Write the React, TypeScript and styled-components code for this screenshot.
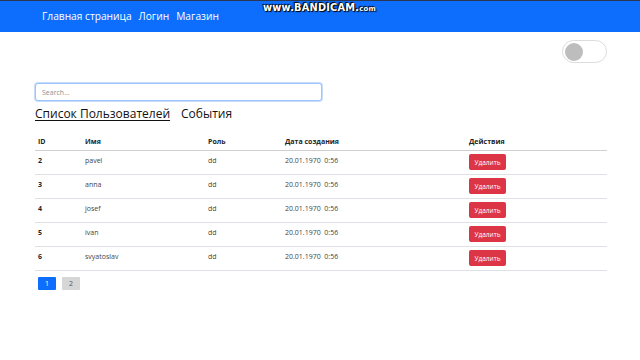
import React, { useState } from "react";
import styled, { createGlobalStyle } from "styled-components";

const users = [
  { id: 2, name: "pavel", role: "dd", created: "20.01.1970  0:56" },
  { id: 3, name: "anna", role: "dd", created: "20.01.1970  0:56" },
  { id: 4, name: "josef", role: "dd", created: "20.01.1970  0:56" },
  { id: 5, name: "ivan", role: "dd", created: "20.01.1970  0:56" },
  { id: 6, name: "svyatoslav", role: "dd", created: "20.01.1970  0:56" },
];

const GlobalStyle = createGlobalStyle`
  * { box-sizing: border-box; }
  body {
    margin: 0;
    background: #fff;
    font-family: "Open Sans", "Noto Sans", sans-serif;
    color: #212529;
  }
`;

const Page = styled.div`
  position: relative;
  width: 640px;
  height: 360px;
  overflow: hidden;
`;

const Navbar = styled.nav`
  height: 32px;
  background: #0d6efd;
  border-top: 1px solid #2a3550;
  display: flex;
  align-items: center;
  gap: 7px;
  padding: 0 0 1px 42px;
`;

const NavLink = styled.a`
  color: #fff;
  font-size: 10.2px;
  text-decoration: none;
  cursor: pointer;
`;

const Watermark = styled.div`
  position: absolute;
  top: 2px;
  left: 263px;
  font-family: "DejaVu Sans", sans-serif;
  font-weight: bold;
  font-size: 9.8px;
  color: #fff;
  letter-spacing: 0.2px;
  text-shadow: 0 0 1px #000, 1px 1px 1px #000, -1px -1px 1px #000;
  span { font-size: 7px; }
`;

const Content = styled.main`
  padding: 8px 33px 0 35px;
`;

const ToggleRow = styled.div`
  display: flex;
  justify-content: flex-end;
  height: 23px;
`;

const Switch = styled.button<{ $on: boolean }>`
  width: 45px;
  height: 23px;
  border-radius: 12px;
  border: 1px solid #dcdcdc;
  background: ${(p) => (p.$on ? "#0d6efd" : "#fff")};
  padding: 0 2px;
  display: flex;
  align-items: center;
  justify-content: ${(p) => (p.$on ? "flex-end" : "flex-start")};
  cursor: pointer;
  &::before {
    content: "";
    width: 18px;
    height: 18px;
    border-radius: 50%;
    background: ${(p) => (p.$on ? "#fff" : "#bdbdbd")};
  }
`;

const SearchInput = styled.input`
  display: block;
  margin-top: 20px;
  width: 287px;
  height: 18px;
  border: 1px solid #9ec5fe;
  border-radius: 3px;
  box-shadow: 0 0 0 1px #c7dcfb;
  padding: 0 6px;
  font-family: inherit;
  font-size: 7px;
  outline: none;
  &::placeholder { color: #8a8f95; }
`;

const Tabs = styled.div`
  display: flex;
  gap: 11px;
  margin-top: 4px;
`;

const Tab = styled.button<{ $active: boolean }>`
  background: none;
  border: none;
  padding: 0;
  font-family: inherit;
  font-size: 12px;
  color: #111;
  text-decoration: ${(p) => (p.$active ? "underline" : "none")};
  text-underline-offset: 2px;
  cursor: pointer;
`;

const Table = styled.table`
  width: 572px;
  margin-top: 12px;
  border-collapse: collapse;
  font-size: 7px;
`;

const Th = styled.th<{ $w: number }>`
  width: ${(p) => p.$w}px;
  text-align: left;
  font-weight: 700;
  padding: 3px 3px 4px;
  border-bottom: 1px solid #cfcfcf;
`;

const Td = styled.td<{ $bold?: boolean }>`
  padding: 5px 3px 0;
  height: 24px;
  vertical-align: top;
  font-weight: ${(p) => (p.$bold ? 700 : 400)};
  color: ${(p) => (p.$bold ? "#212529" : "#444")};
  border-bottom: 1px solid #dee2e6;
`;

const ActionTd = styled(Td)`
  padding-top: 3px;
`;

const DeleteButton = styled.button`
  width: 37px;
  height: 16px;
  background: #dc3545;
  border: none;
  border-radius: 2px;
  color: #fff;
  font-family: inherit;
  font-size: 6.5px;
  padding: 0;
  cursor: pointer;
`;

const Pagination = styled.div`
  display: flex;
  gap: 6px;
  margin: 6px 0 0 3px;
`;

const PageButton = styled.button<{ $active: boolean }>`
  width: 18px;
  height: 13px;
  border: none;
  border-radius: 1px;
  padding: 0;
  font-family: inherit;
  font-size: 7px;
  background: ${(p) => (p.$active ? "#0d6efd" : "#d6d6d6")};
  color: ${(p) => (p.$active ? "#fff" : "#555")};
  cursor: pointer;
`;

const App = () => {
  const [dark, setDark] = useState(false);
  const [tab, setTab] = useState(0);
  const [page, setPage] = useState(1);

  return (
    <Page>
      <GlobalStyle />
      <Navbar>
        <NavLink>Главная страница</NavLink>
        <NavLink>Логин</NavLink>
        <NavLink>Магазин</NavLink>
      </Navbar>
      <Watermark>
        www.BANDICAM.<span>com</span>
      </Watermark>
      <Content>
        <ToggleRow>
          <Switch $on={dark} onClick={() => setDark(!dark)} />
        </ToggleRow>
        <SearchInput placeholder="Search..." />
        <Tabs>
          <Tab $active={tab === 0} onClick={() => setTab(0)}>
            Список Пользователей
          </Tab>
          <Tab $active={tab === 1} onClick={() => setTab(1)}>
            События
          </Tab>
        </Tabs>
        <Table>
          <thead>
            <tr>
              <Th $w={47}>ID</Th>
              <Th $w={123}>Имя</Th>
              <Th $w={77}>Роль</Th>
              <Th $w={184}>Дата создания</Th>
              <Th $w={141}>Действия</Th>
            </tr>
          </thead>
          <tbody>
            {users.map((u) => (
              <tr key={u.id}>
                <Td $bold>{u.id}</Td>
                <Td>{u.name}</Td>
                <Td>{u.role}</Td>
                <Td style={{ whiteSpace: "pre" }}>{u.created}</Td>
                <ActionTd>
                  <DeleteButton>Удалить</DeleteButton>
                </ActionTd>
              </tr>
            ))}
          </tbody>
        </Table>
        <Pagination>
          {[1, 2].map((n) => (
            <PageButton key={n} $active={page === n} onClick={() => setPage(n)}>
              {n}
            </PageButton>
          ))}
        </Pagination>
      </Content>
    </Page>
  );
};

export default App;
